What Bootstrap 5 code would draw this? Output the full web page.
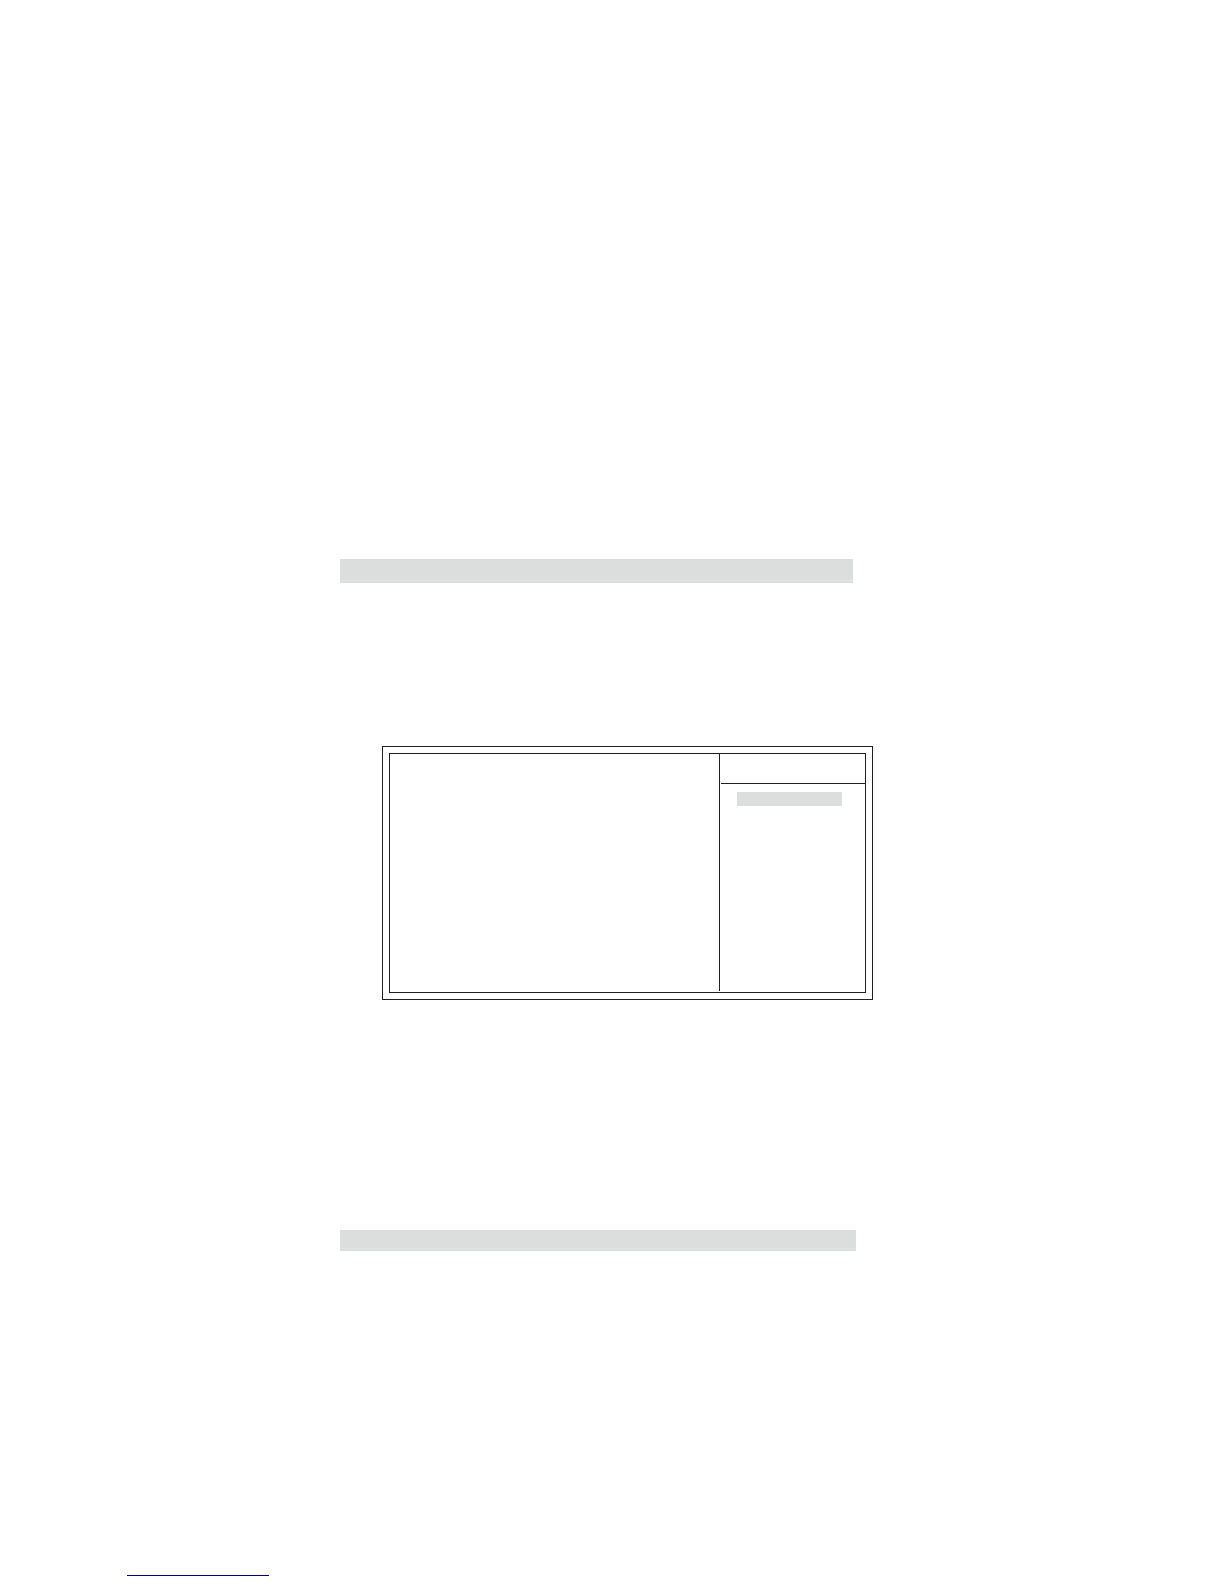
<!DOCTYPE html>
<html lang="en">
<head>
<meta charset="utf-8">
<meta name="viewport" content="width=device-width, initial-scale=1">
<title>Setup screen layout</title>
<link href="https://cdn.jsdelivr.net/npm/bootstrap@5.3.0/dist/css/bootstrap.min.css" rel="stylesheet">
<style>
  body { background: #fff; font-family: "Liberation Sans", Arial, sans-serif; }
  .sheet { padding: 559px 351px 0 340px; }
  .band { background: #dcdddd; }
  .band-top { height: 24px; margin-right: 20px; border-bottom: 2px solid #dcdddd; box-shadow: inset 0 -1px #e3e4e4; }
  .band-bottom { height: 21px; margin-right: 17px; border-bottom: 2px solid #dcdddd; box-shadow: inset 0 -1px #e3e4e4; }
  .screen { margin: 163px 0 230px 42px; padding: 6px; border: 1px solid #231f20; }
  .screen-inner { min-height: 240px; border: 1px solid #231f20; }
  .settings { border-right: 1px solid #231f20; margin-bottom: 1px; }
  .help { width: 145px; }
  .help-title { height: 30px; margin-left: 1px; border-bottom: 1px solid #231f20; }
  .help-item { height: 14px; margin: 8px 23px 0 17px; }
  .rule { width: 142px; height: 1px; margin: 324px 0 8px 127px; background: #000080; }
</style>
</head>
<body>
<main class="sheet">
  <div class="band band-top"></div>
  <section class="screen">
    <div class="screen-inner d-flex">
      <div class="settings flex-grow-1"></div>
      <aside class="help flex-shrink-0 d-flex flex-column">
        <div class="help-title"></div>
        <div class="help-item band"></div>
      </aside>
    </div>
  </section>
  <div class="band band-bottom"></div>
</main>
<footer class="d-flex">
  <div class="rule"></div>
</footer>
<script src="https://cdn.jsdelivr.net/npm/bootstrap@5.3.0/dist/js/bootstrap.bundle.min.js"></script>
</body>
</html>
